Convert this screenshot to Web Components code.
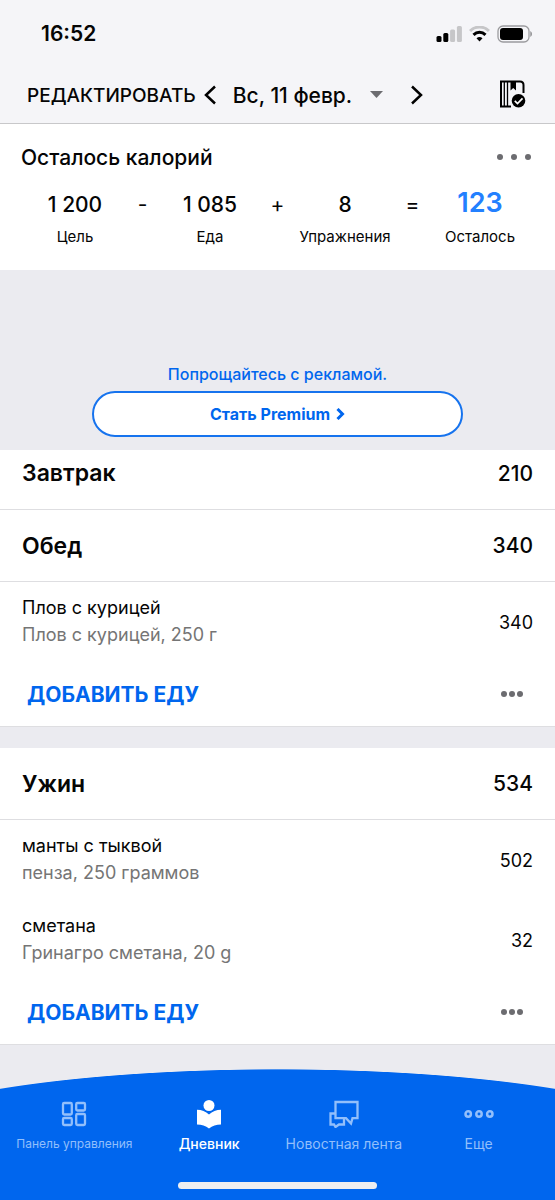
<!DOCTYPE html>
<html lang="ru">
<head>
<meta charset="utf-8">
<meta name="viewport" content="width=device-width, initial-scale=1">
<title>Дневник</title>
<style>
  body { margin: 0; font-family: Inter, "Liberation Sans", sans-serif; color: #050505; background: #ebebf0; }
</style>
</head>
<body>
<diary-app></diary-app>
<script>
const reset = `
  *, *::before, *::after { box-sizing: border-box; }
  button { font: inherit; color: inherit; background: none; border: 0; padding: 0; margin: 0; cursor: pointer; display: flex; align-items: center; }
  h1, h2, p { margin: 0; padding: 0; font-weight: inherit; font-size: inherit; }
  svg { display: block; flex: none; }
`;

function define(name, markup, setup) {
  customElements.define(name, class extends HTMLElement {
    connectedCallback() {
      if (this.shadowRoot) return;
      const template = document.createElement('template');
      template.innerHTML = `<style>${reset}</style>` + markup;
      this.attachShadow({ mode: 'open' }).append(template.content.cloneNode(true));
      if (setup) setup.call(this, this.shadowRoot);
    }
  });
}

define('status-bar', `
  <style>
    :host { display: flex; align-items: center; justify-content: space-between; height: 67px; padding: 0 23px 0 41px; }
    time { font-size: 21px; font-weight: 600; }
    .icons { display: flex; align-items: center; gap: 7px; }
  </style>
  <time>16:52</time>
  <div class="icons">
    <svg width="26" height="16" viewBox="0 0 26 16" aria-label="Сигнал">
      <rect x="0.500" y="10" width="5" height="6" rx="1.500"/><rect x="7.300" y="7" width="5" height="9" rx="1.500"/>
      <rect x="14.100" y="3.500" width="5" height="12.500" rx="1.500" fill="#c6c6c8"/><rect x="20.900" y="0" width="5" height="16" rx="1.500" fill="#c6c6c8"/>
    </svg>
    <svg width="21" height="16" viewBox="0 0 21 16" fill="none" aria-label="Wi-Fi">
      <path d="M1 5C6-.2 15-.2 20 5" stroke="#c6c6c8" stroke-width="3"/>
      <path d="M4.500 8.800C8 5.400 13 5.400 16.500 8.800" stroke="#000" stroke-width="3"/>
      <path d="M7.500 12.200Q10.500 10 13.500 12.200L10.500 15.500Z" fill="#000"/>
    </svg>
    <svg width="35" height="18" viewBox="0 0 35 18" aria-label="Батарея">
      <rect x="1" y="1" width="31" height="16" rx="5" fill="none" stroke="#9b9b9e" stroke-width="1.300"/>
      <rect x="3" y="3" width="23" height="12" rx="3"/>
      <path d="M33.300 6Q35 7 35 9T33.300 12Z" fill="#8e8e91"/>
    </svg>
  </div>
`);

define('date-bar', `
  <style>
    :host { display: flex; align-items: center; height: 56px; padding: 0 29px 0 27px; }
    .edit { font-size: 19px; font-weight: 500; }
    .prev { margin-left: 8px; }
    .date { margin-left: 17px; font-size: 21px; font-weight: 500; gap: 18px; white-space: nowrap; }
    .next { margin-left: 28px; }
    .done { margin-left: auto; }
  </style>
  <button class="edit">РЕДАКТИРОВАТЬ</button>
  <button class="prev" aria-label="Предыдущий день"><svg width="12" height="20" viewBox="0 0 12 20" fill="none" stroke="#000" stroke-width="2.500"><path d="M11 1.500L2 10L11 18.500"/></svg></button>
  <button class="date" aria-haspopup="listbox">Вс, 11 февр.<svg width="13" height="8" viewBox="0 0 13 8" fill="#6c6c70"><path d="M0 0H13L6.500 7Z"/></svg></button>
  <button class="next" aria-label="Следующий день"><svg width="12" height="20" viewBox="0 0 12 20" fill="none" stroke="#000" stroke-width="2.500"><path d="M1 1.500L10 10L1 18.500"/></svg></button>
  <button class="done" aria-label="Завершить дневник">
    <svg width="27" height="30" viewBox="0 0 27 30" fill="none" stroke="#000">
      <path d="M12 26.500H2V1.500H21Q24.500 1.500 24.500 5V13" stroke-width="2"/>
      <path d="M5.300 1V26M8.500 1V26" stroke-width="1.300"/>
      <path d="M11.500 1H17V10.500L14.200 8L11.500 10.500Z" fill="#000" stroke="none"/>
      <circle cx="19.500" cy="20.800" r="6.800" fill="#000" stroke="none"/>
      <path d="M15.800 20.800L18.500 23.500L23.500 18.300" stroke="#fff" stroke-width="1.700"/>
    </svg>
  </button>
`);

define('more-button', `
  <style>
    :host { display: block; color: #6c6c70; }
    button { gap: var(--dot-gap, 2px); }
    i { width: 6px; height: 6px; border-radius: 50%; background: currentColor; }
  </style>
  <button aria-label="Ещё"><i></i><i></i><i></i></button>
`);

define('calorie-part', `
  <style>
    :host { display: flex; flex-direction: column; align-items: center; white-space: nowrap; min-width: 0; }
    .value { font-size: 21px; line-height: 32px; font-weight: 500; }
    .label { font-size: 15px; line-height: 24px; margin-top: 4px; }
    :host([total]) .value { font-size: 27px; line-height: 28px; margin-bottom: 4px; font-weight: 600; color: #2380ff; }
  </style>
  <span class="value"><slot></slot></span><span class="label"></span>
`, function (root) { root.querySelector('.label').textContent = this.getAttribute('label'); });

define('calorie-summary', `
  <style>
    :host { display: block; padding: 17px 0 21px; background: #fff; }
    header { display: flex; justify-content: space-between; align-items: center; height: 32px; padding: 0 24px 0 21px; }
    h1 { font-size: 21px; font-weight: 500; }
    more-button { --dot-gap: 8px; }
    .sum { display: grid; grid-template-columns: 110fr 25fr 110fr 25fr 110fr 25fr 110fr; padding: 0 20px; margin-top: 16px; }
    .op { text-align: center; font-size: 21px; line-height: 32px; }
  </style>
  <header><h1>Осталось калорий</h1><more-button></more-button></header>
  <div class="sum">
    <calorie-part label="Цель">1 200</calorie-part><span class="op">-</span>
    <calorie-part label="Еда">1 085</calorie-part><span class="op">+</span>
    <calorie-part label="Упражнения">8</calorie-part><span class="op">=</span>
    <calorie-part label="Осталось" total>123</calorie-part>
  </div>
`);

define('premium-offer', `
  <style>
    :host { display: flex; flex-direction: column; align-items: center; padding: 92px 0 13px; color: #0066ee; }
    p { font-size: 16px; line-height: 24px; font-weight: 500; }
    button { justify-content: center; gap: 6px; width: 67%; height: 46px; margin-top: 5px; border: 2px solid #1673ee; border-radius: 23px; background: #fff; font-size: 16px; font-weight: 700; }
  </style>
  <p>Попрощайтесь с рекламой.</p>
  <button>Стать Premium<svg width="9" height="12" viewBox="0 0 9 12" fill="none" stroke="currentColor" stroke-width="3"><path d="M1.500 1L6.500 6L1.500 11"/></svg></button>
`);

define('food-item', `
  <style>
    :host { display: flex; align-items: center; justify-content: space-between; height: 80px; padding: 0 22px; font-size: 18px; line-height: 27px; }
    div { padding-bottom: 3px; }
    .detail { color: #757575; }
  </style>
  <div><p><slot></slot></p><p class="detail"></p></div><span class="kcal"></span>
`, function (root) {
  root.querySelector('.detail').textContent = this.getAttribute('detail');
  root.querySelector('.kcal').textContent = this.getAttribute('kcal');
});

define('meal-section', `
  <style>
    :host { display: block; background: #fff; }
    header { display: flex; align-items: center; justify-content: space-between; height: 72px; padding: 0 22px; border-bottom: 1px solid #dedee1; }
    :host([collapsed]) header { height: 60px; padding-bottom: 13px; }
    h2 { font-size: 23px; font-weight: 600; }
    .total { font-size: 21px; font-weight: 500; }
    footer { display: flex; align-items: center; justify-content: space-between; height: 65px; padding: 0 32px 0 27px; border-bottom: 1px solid #dedee1; }
    .add { font-size: 21px; font-weight: 700; color: #0066ee; }
  </style>
  <header><h2></h2><span class="total"></span></header>
  <slot></slot>
  <footer><button class="add">ДОБАВИТЬ ЕДУ</button><more-button></more-button></footer>
`, function (root) {
  root.querySelector('h2').textContent = this.getAttribute('name');
  root.querySelector('.total').textContent = this.getAttribute('kcal');
  if (this.hasAttribute('collapsed')) root.querySelector('footer').remove();
});

define('nav-tab', `
  <style>
    :host { display: block; color: #92bffb; font-size: 14px; }
    :host([active]) { color: #fff; font-weight: 500; }
    :host([compact]) { font-size: 12px; }
    a { display: flex; flex-direction: column; align-items: center; color: inherit; text-decoration: none; white-space: nowrap; }
    .icon { display: flex; align-items: center; height: 32px; }
    .label { line-height: 20px; margin-top: 4px; }
  </style>
  <a href="#"><span class="icon"><slot></slot></span><span class="label"></span></a>
`, function (root) { root.querySelector('.label').textContent = this.getAttribute('label'); });

define('nav-bar', `
  <style>
    :host { display: flex; flex-direction: column; height: 131px; padding-top: 29px; overflow: hidden; box-sizing: border-box;
      background: radial-gradient(75% 76px at 50% 76px, #0066ee 99%, transparent 100%) top / 100% 50px no-repeat, linear-gradient(#0066ee, #0066ee) 0 50px / 100% 100% no-repeat; }
    nav { display: grid; grid-template-columns: repeat(4, 1fr); padding: 0 9px 0 7px; }
    .home { width: 36%; height: 7px; border-radius: 4px; background: #eeeef0; margin: auto auto 11px; }
  </style>
  <nav>
    <nav-tab label="Панель управления" compact><svg width="26" height="26" viewBox="0 0 26 26" fill="none" stroke="currentColor" stroke-width="2.300"><rect x="2" y="2" width="8.800" height="11.500" rx="1.200"/><rect x="15.200" y="2" width="8.800" height="7.500" rx="1.200"/><rect x="2" y="17" width="8.800" height="7" rx="1.200"/><rect x="15.200" y="13" width="8.800" height="11" rx="1.200"/></svg></nav-tab>
    <nav-tab label="Дневник" active><svg width="26" height="30" viewBox="0 0 26 30" fill="currentColor"><circle cx="13" cy="6.500" r="5.500"/><path d="M1 10.800Q8 11 13 15.500Q18 11 25 10.800V25.500Q18 25.500 13 29.500Q8 25.500 1 25.500Z"/></svg></nav-tab>
    <nav-tab label="Новостная лента"><svg width="30" height="28" viewBox="0 0 30 28" fill="none" stroke="currentColor" stroke-width="2.300"><path d="M6.500 2H28.500V18.200H23.500L22 23.500L17 18.200H6.500Z"/><path d="M6.500 13.500H1.500V24.500H5L6.500 27L10 24.500H15V19"/></svg></nav-tab>
    <nav-tab label="Еще"><svg width="30" height="10" viewBox="0 0 30 10" fill="none" stroke="currentColor" stroke-width="2.500"><circle cx="4.200" cy="5" r="2.700"/><circle cx="15" cy="5" r="2.700"/><circle cx="25.800" cy="5" r="2.700"/></svg></nav-tab>
  </nav>
  <div class="home"></div>
`);

define('diary-app', `
  <style>
    :host { display: flex; flex-direction: column; min-height: 100vh; }
    .top { background: #f5f5f8; border-bottom: 1px solid #c8c8ca; }
    main { display: flex; flex-direction: column; }
    .dinner { margin-top: 21px; }
    nav-bar { margin-top: auto; }
  </style>
  <div class="top"><status-bar></status-bar><date-bar></date-bar></div>
  <main>
    <calorie-summary></calorie-summary>
    <premium-offer></premium-offer>
    <meal-section name="Завтрак" kcal="210" collapsed></meal-section>
    <meal-section name="Обед" kcal="340">
      <food-item detail="Плов с курицей, 250 г" kcal="340">Плов с курицей</food-item>
    </meal-section>
    <meal-section class="dinner" name="Ужин" kcal="534">
      <food-item detail="пенза, 250 граммов" kcal="502">манты с тыквой</food-item>
      <food-item detail="Гринагро сметана, 20 g" kcal="32">сметана</food-item>
    </meal-section>
  </main>
  <nav-bar></nav-bar>
`);
</script>
</body>
</html>
